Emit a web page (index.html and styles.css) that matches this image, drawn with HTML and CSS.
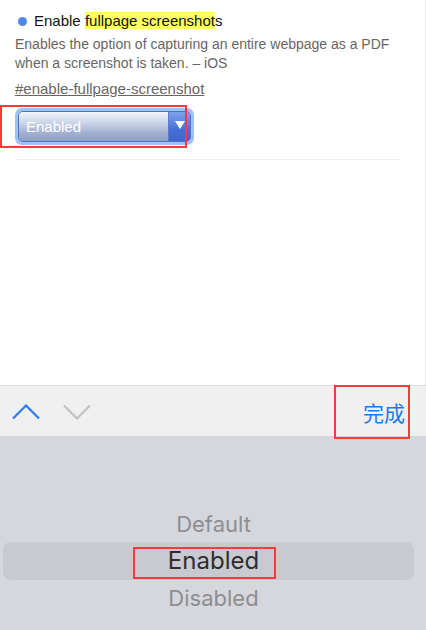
FILE: index.html
```html
<!DOCTYPE html>
<html>
<head>
<meta charset="utf-8">
<link rel="stylesheet" href="styles.css">
</head>
<body>
<div class="page">
  <main class="content">
    <section class="flag">
      <h3 class="flag-title"><span class="dot"></span><span>Enable <mark class="hl">fullpage screenshot</mark>s</span></h3>
      <p class="flag-desc">Enables the option of capturing an entire webpage as a PDF when a screenshot is taken. – iOS</p>
      <a class="flag-link" href="#enable-fullpage-screenshot">#enable-fullpage-screenshot</a>
      <div class="select-wrap">
        <div class="select">
          <span class="select-label">Enabled</span>
          <span class="select-arrow"><svg width="10" height="8" viewBox="0 0 10 8"><polygon points="0,0 10,0 5,8" fill="#fff"/></svg></span>
        </div>
      </div>
    </section>
    <hr class="divider">
  </main>
  <div class="toolbar">
    <div class="nav">
      <svg class="chev" width="28" height="16" viewBox="0 0 28 16"><polyline points="1,14.5 14,1.5 27,14.5" fill="none" stroke="#2a7cf0" stroke-width="2.2"/></svg>
      <svg class="chev" width="28" height="16" viewBox="0 0 28 16"><polyline points="1,1.5 14,14.5 27,1.5" fill="none" stroke="#c2c2c4" stroke-width="2.2"/></svg>
    </div>
    <span class="done">完成</span>
  </div>
  <div class="picker">
    <div class="row">Default</div>
    <div class="row selected">Enabled</div>
    <div class="row">Disabled</div>
  </div>
  <div class="mark-box box-select"></div>
  <div class="mark-box box-done"></div>
  <div class="mark-box box-enabled"></div>
</div>
</body>
</html>
```
FILE: styles.css
```css
html, body {
  margin: 0;
  padding: 0;
}
body {
  font-family: "Liberation Sans", Arial, sans-serif;
  background: #fff;
}
.page {
  position: relative;
  width: 426px;
  height: 630px;
  overflow: hidden;
  display: flex;
  flex-direction: column;
}
.content {
  height: 385px;
  box-sizing: border-box;
  border-right: 1px solid #ebebeb;
  background: #fff;
}
.flag {
  padding: 11px 24px 0 15px;
  display: flex;
  flex-direction: column;
  align-items: flex-start;
}
.flag-title {
  margin: 0;
  font-size: 15px;
  font-weight: normal;
  line-height: 20px;
  color: #111;
  display: flex;
  align-items: center;
}
.dot {
  width: 9px;
  height: 9px;
  border-radius: 50%;
  background: #4f88ee;
  margin: 0 7px 0 3px;
}
.hl {
  background: #ffff66;
  color: #111;
}
.flag-desc {
  margin: 4px 0 0;
  font-size: 14px;
  line-height: 19px;
  color: #666;
}
.flag-link {
  margin-top: 6px;
  font-size: 15px;
  line-height: 19px;
  color: #666;
  text-decoration: underline;
}
.select-wrap {
  margin-top: 10px;
  width: 179px;
  height: 37px;
  box-sizing: border-box;
  padding: 3px;
  border-radius: 7px;
  background: #9ec2f8;
}
.select {
  height: 31px;
  box-sizing: border-box;
  border: 1px solid #4e72c4;
  border-radius: 5px;
  display: flex;
  overflow: hidden;
}
.select-label {
  flex: 1;
  padding-left: 7px;
  font-size: 15px;
  line-height: 29px;
  color: #fff;
  background: linear-gradient(#f2f5fb 0%, #c8d2e8 40%, #a4b2d2 70%, #8e9fc4 100%);
  border-right: 1px solid #5a7cc8;
}
.select-arrow {
  width: 21px;
  display: flex;
  align-items: center;
  justify-content: center;
  padding-bottom: 3px;
  box-sizing: border-box;
  background: linear-gradient(#7ea2ee, #4670d6 60%, #3d66cc);
}
.divider {
  margin: 14px 24px 0 15px;
  border: 0;
  border-top: 1px solid #eeeeee;
  height: 0;
}
.toolbar {
  height: 51px;
  box-sizing: border-box;
  border-top: 1px solid #dedede;
  background: #f0f0f0;
  display: flex;
  align-items: center;
  justify-content: space-between;
  padding: 0 21px 0 12px;
}
.nav {
  display: flex;
  gap: 23px;
  padding-top: 1px;
}
.chev {
  display: block;
}
.done {
  font-family: "Noto Sans CJK SC", "Noto Sans CJK JP", sans-serif;
  font-size: 21px;
  line-height: 24px;
  color: #1f77ec;
  margin-top: 1px;
}
.picker {
  flex: 1;
  background: #d5d7dc;
  padding-top: 70px;
  display: flex;
  flex-direction: column;
  font-family: Inter, "Liberation Sans", sans-serif;
}
.row {
  height: 36px;
  line-height: 36px;
  text-align: center;
  font-size: 22px;
  color: #8d8e92;
  margin: 0 12px 0 3px;
  padding-left: 10px;
}
.row.selected {
  height: 38px;
  line-height: 38px;
  font-size: 24px;
  color: #2e2e30;
  background: #c9cacf;
  border-radius: 8px;
}
.mark-box {
  position: absolute;
  box-sizing: border-box;
  border: 2px solid #f43c3c;
}
.box-select {
  left: 0;
  top: 105px;
  width: 187px;
  height: 43px;
}
.box-done {
  left: 334px;
  top: 385px;
  width: 76px;
  height: 54px;
}
.box-enabled {
  left: 133px;
  top: 547px;
  width: 143px;
  height: 32px;
}
```
